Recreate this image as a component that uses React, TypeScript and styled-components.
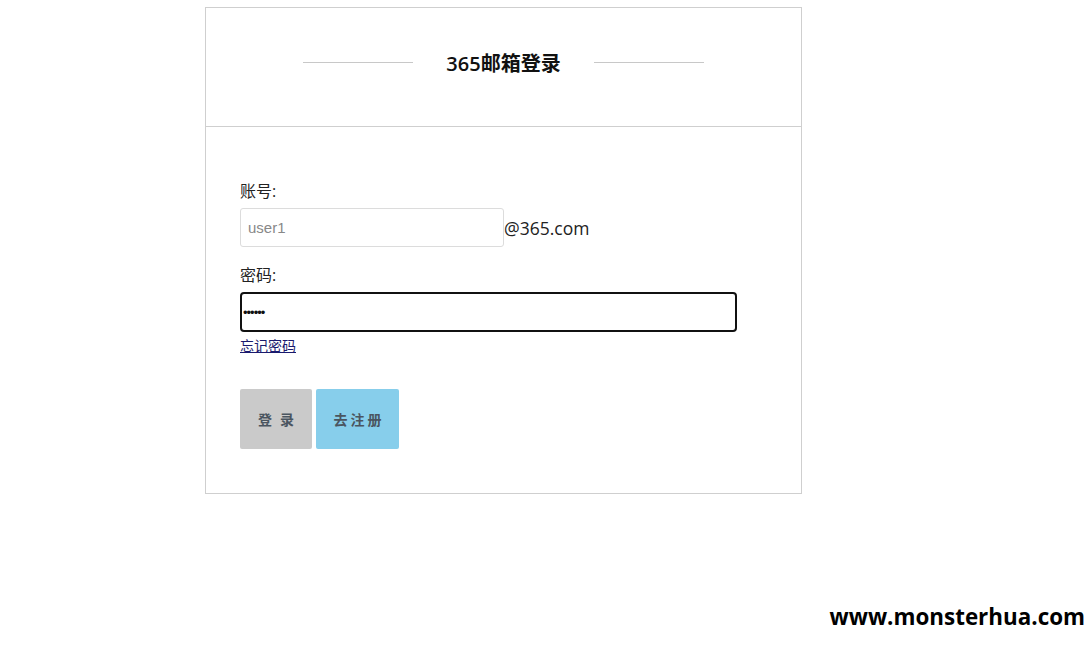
import React from "react";
import styled, { createGlobalStyle } from "styled-components";

const Global = createGlobalStyle`
  html, body { margin: 0; padding: 0; background: #fff; }
  body { font-family: "Open Sans", "Noto Sans CJK SC", sans-serif; color: #222; }
  #root { padding: 7px 0 0 205px; height: 640px; box-sizing: border-box; }
`;

const Card = styled.div`
  width: 597px;
  box-sizing: border-box;
  border: 1px solid #cfcfcf;
  background: #fff;
`;

const Header = styled.div`
  height: 119px;
  border-bottom: 1px solid #cfcfcf;
  display: flex;
  align-items: center;
  justify-content: center;
  gap: 33px;
  padding-bottom: 9px;
  box-sizing: border-box;
`;

const Line = styled.div`
  width: 110px;
  height: 1px;
  background: #c8c8c8;
`;

const Title = styled.h1`
  margin: 0;
  font-size: 20px;
  font-weight: 600;
  color: #111;
  font-family: "Open Sans", "Noto Sans CJK SC", sans-serif;
`;

const Body = styled.form`
  padding: 54px 34px 44px 34px;
  display: flex;
  flex-direction: column;
`;

const Label = styled.label`
  font-size: 16px;
  line-height: 20px;
  color: #222;
  margin-bottom: 7px;
`;

const Row = styled.div`
  display: flex;
  align-items: center;
  margin-bottom: 18px;
`;

const Input = styled.input<{ $w: number; $focus?: boolean }>`
  width: ${(p) => p.$w}px;
  height: ${(p) => (p.$focus ? 40 : 39)}px;
  box-sizing: border-box;
  border: ${(p) => (p.$focus ? "2px solid #111" : "1px solid #dcdcdc")};
  border-radius: ${(p) => (p.$focus ? 4 : 3)}px;
  padding: 0 7px;
  font-size: 15px;
  font-family: "Liberation Sans", Arial, sans-serif;
  color: #111;
  outline: none;
  &::placeholder { color: #888; }
`;

const Suffix = styled.span`
  font-size: 17.5px;
  color: #222;
`;

const PwInput = styled(Input)`
  padding: 0 1px;
  font-size: 13px;
  letter-spacing: -1px;
`;

const Forgot = styled.a`
  margin-top: 3px;
  font-size: 14px;
  color: #1a1a6e;
  text-decoration: underline;
  width: fit-content;
  font-family: "Noto Sans CJK SC", sans-serif;
`;

const Buttons = styled.div`
  display: flex;
  gap: 4px;
  margin-top: 34px;
`;

const Btn = styled.button<{ $bg: string; $w: number; $spacing: number }>`
  width: ${(p) => p.$w}px;
  height: 60px;
  border: none;
  border-radius: 2px;
  background: ${(p) => p.$bg};
  color: #4a5560;
  font-size: 14px;
  font-weight: 700;
  letter-spacing: ${(p) => p.$spacing}px;
  font-family: "Noto Sans CJK SC", sans-serif;
  padding: 0 0 0 ${(p) => p.$spacing}px;
`;

const Watermark = styled.div`
  position: absolute;
  right: 3px;
  top: 601px;
  font-size: 22.4px;
  font-weight: 700;
  color: #000;
  font-family: "Open Sans", sans-serif;
`;

export default function App() {
  return (
    <>
      <Global />
      <Card>
        <Header>
          <Line />
          <Title>365邮箱登录</Title>
          <Line />
        </Header>
        <Body onSubmit={(e) => e.preventDefault()}>
          <Label>账号:</Label>
          <Row>
            <Input $w={264} placeholder="user1" />
            <Suffix>@365.com</Suffix>
          </Row>
          <Label>密码:</Label>
          <PwInput $w={497} $focus type="password" defaultValue="123456" />
          <Forgot href="#">忘记密码</Forgot>
          <Buttons>
            <Btn type="button" $bg="#cacaca" $w={72} $spacing={8}>登录</Btn>
            <Btn type="button" $bg="#87ceeb" $w={83} $spacing={3}>去注册</Btn>
          </Buttons>
        </Body>
      </Card>
      <Watermark>www.monsterhua.com</Watermark>
    </>
  );
}
